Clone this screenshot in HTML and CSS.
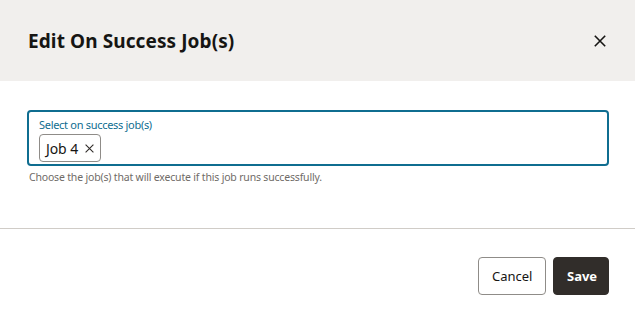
FILE: index.html
```html
<!DOCTYPE html>
<html lang="en">
<head>
<meta charset="utf-8">
<title>Edit On Success Job(s)</title>
<link rel="stylesheet" href="styles.css">
</head>
<body>
<div class="dialog">
  <header class="dlg-header">
    <h1 class="dlg-title">Edit On Success Job(s)</h1>
    <button class="close-btn" aria-label="Close">
      <svg width="12" height="12" viewBox="0 0 12 12"><path d="M0.8 0.8 L11.2 11.2 M11.2 0.8 L0.8 11.2" stroke="#161513" stroke-width="1.6" fill="none"/></svg>
    </button>
  </header>
  <main class="dlg-body">
    <div class="field">
      <label class="field-label">Select on success job(s)</label>
      <div class="chips">
        <span class="chip">Job 4<svg class="chip-x" width="9" height="9" viewBox="0 0 9 9"><path d="M0.6 0.6 L8.4 8.4 M8.4 0.6 L0.6 8.4" stroke="#312d2a" stroke-width="1.1" fill="none"/></svg></span>
      </div>
    </div>
    <p class="helper">Choose the job(s) that will execute if this job runs successfully.</p>
  </main>
  <footer class="dlg-footer">
    <button class="btn btn-outline">Cancel</button>
    <button class="btn btn-solid">Save</button>
  </footer>
</div>
</body>
</html>
```

FILE: styles.css
```css
* { box-sizing: border-box; }
html, body { margin: 0; padding: 0; background: #ffffff; }
body {
  font-family: "Noto Sans", "Open Sans", "Liberation Sans", sans-serif;
  color: #161513;
  width: 635px;
  height: 323px;
  overflow: hidden;
}
.dialog { display: flex; flex-direction: column; height: 323px; }
.dlg-header {
  height: 81px;
  background: #f1efed;
  display: flex;
  align-items: center;
  justify-content: space-between;
  padding: 0 29px 0 28px;
}
.dlg-title {
  margin: 0;
  font-size: 19px;
  font-weight: 700;
  color: #161513;
  letter-spacing: 0.1px;
}
.close-btn {
  border: 0;
  background: transparent;
  padding: 0;
  width: 12px;
  height: 12px;
  display: flex;
}
.dlg-body {
  padding: 29px 26px 0 27px;
  height: 148px;
  border-bottom: 1px solid #d0ccc7;
}
.field {
  border: 2px solid #0f6d90;
  border-radius: 4px;
  height: 56px;
  padding: 6px 10px 0 10px;
}
.field-label {
  display: block;
  font-size: 11px;
  line-height: 14px;
  letter-spacing: -0.3px;
  color: #0f6d90;
}
.chips { display: flex; margin-top: 2px; }
.chip {
  display: inline-flex;
  align-items: center;
  height: 28px;
  border: 1px solid #8f8c88;
  border-radius: 4px;
  padding: 0 6px 0 6px;
  font-size: 14px;
  letter-spacing: -0.1px;
  color: #161513;
}
.chip-x { margin-left: 7px; }
.helper {
  margin: 4px 0 0 2px;
  font-size: 10.5px;
  letter-spacing: -0.18px;
  color: #6f6b67;
}
.dlg-footer {
  flex: 1;
  display: flex;
  justify-content: flex-end;
  align-items: flex-start;
  gap: 7px;
  padding: 28px 26px 0 0;
}
.btn {
  height: 38px;
  border-radius: 4px;
  font-family: inherit;
  font-size: 13px;
  padding: 0 13px;
}
.btn-outline {
  background: #ffffff;
  border: 1px solid #8f8c88;
  color: #161513;
  width: 68px;
}
.btn-solid {
  background: #312d2a;
  border: 1px solid #312d2a;
  color: #ffffff;
  font-weight: 700;
  width: 56px;
}
```
